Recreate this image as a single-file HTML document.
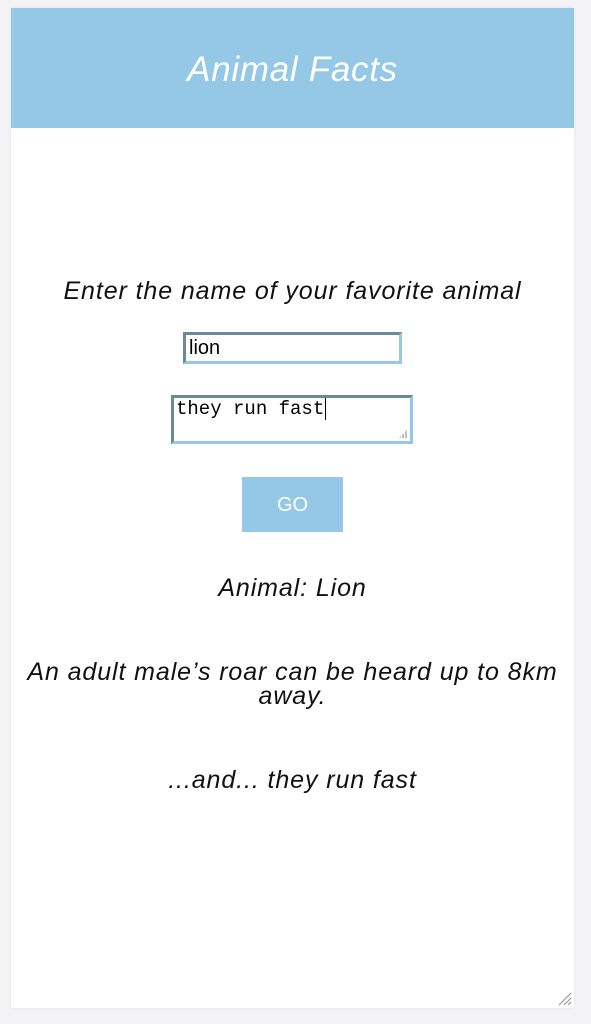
<!DOCTYPE html>
<html><head><style>
body{margin:0;background:#f3f3f5;width:591px;height:1024px;position:relative;overflow:hidden;font-family:"Liberation Sans",sans-serif}
.card{position:absolute;left:11px;top:8px;width:563px;height:1000px;background:#fff;box-shadow:0 0 3px rgba(0,0,0,.08)}
.hdr{height:120px;background:#94c8e6;color:#fff;font-style:italic;font-size:35px;letter-spacing:0.7px;text-align:center;line-height:124px}
.t{position:absolute;left:0;width:563px;text-align:center;font-style:italic;color:#111;font-size:25px;letter-spacing:0.9px;line-height:26px}
.inp{position:absolute;border:3px solid;border-color:#6a8a99 #94c8e6 #94c8e6 #6a8a99;background:#fff;box-sizing:border-box}
.btn{position:absolute;left:231px;top:469px;width:101px;height:55px;background:#94c8e6;color:#fff;font-size:20px;text-align:center;line-height:57px}
</style></head><body>
<div class="card">
<div class="hdr">Animal Facts</div>
<div class="t" style="top:270px">Enter the name of your favorite animal</div>
<div class="inp" style="left:172px;top:324px;width:219px;height:32px;font-size:20px;line-height:27px;padding-left:3px;color:#000">lion</div>
<div class="inp" style="left:160px;top:387px;width:242px;height:49px;font-family:'Liberation Mono',monospace;font-size:19px;line-height:22px;padding-left:2px;color:#000">they run fast<span style="border-left:1px solid #000;margin-left:1px"></span>
<div style="position:absolute;right:3px;bottom:3px;width:8px;height:8px;background:repeating-linear-gradient(90deg,#bbb 0 2px,transparent 2px 3px);clip-path:polygon(100% 0,100% 100%,0 100%)"></div></div>
<div class="btn">GO</div>
<div class="t" style="top:567px">Animal: Lion</div>
<div class="t" style="top:652px;left:12px;width:539px;line-height:24px">An adult male’s roar can be heard up to 8km away.</div>
<div class="t" style="top:759px">...and... they run fast</div>
<svg style="position:absolute;right:2px;bottom:2px" width="16" height="16"><path d="M15 3L3 15M15 8L8 15M15 12L12 15" stroke="#999" stroke-width="1.2"/></svg>
</div>
</body></html>
